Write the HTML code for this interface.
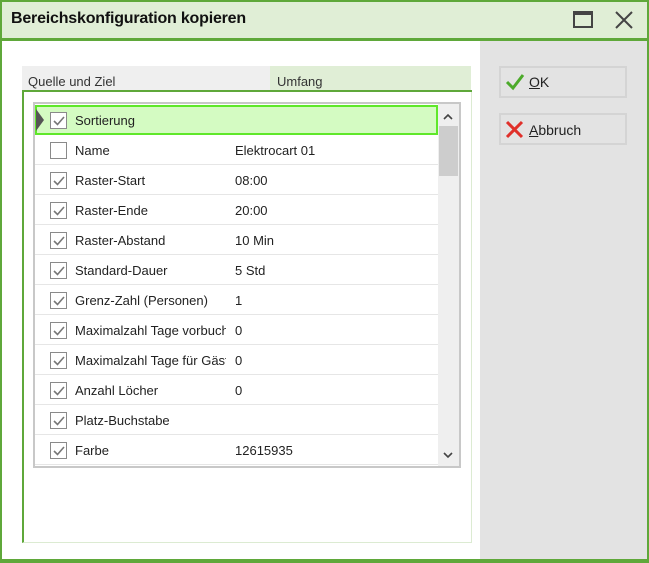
<!DOCTYPE html>
<html><head><style>
*{margin:0;padding:0;box-sizing:border-box}
body{width:649px;height:563px;overflow:hidden;background:#fff;font-family:"Liberation Sans",sans-serif;font-size:13px;color:#222;position:relative}
.abs{position:absolute}
.row{position:absolute;left:35px;width:403px;height:30px;border-bottom:1px solid #e6e6e6}
.row .cb{position:absolute;left:15px;top:7px;width:17px;height:17px;border:1px solid #8a8a8a;background:#fff}
.row .cb svg{position:absolute;left:1px;top:1px}
.row .l{position:absolute;left:40px;top:8px;white-space:nowrap;width:151px;overflow:hidden}
.row .v{position:absolute;left:200px;top:8px}
.btn{position:absolute;left:499px;width:128px;height:32px;border:2px solid #d4d4d4;background:#e3e3e3;font-size:14px}
</style></head><body>
<div class="abs" style="left:0;top:0;width:649px;height:563px;border:2px solid #5fa83a"></div>
<div class="abs" style="left:2px;top:2px;width:645px;height:37px;background:#e0eed6"></div>
<div class="abs" style="left:2px;top:38px;width:645px;height:3px;background:#5fa83a"></div>
<div class="abs" style="left:11px;top:10px;font-size:16px;font-weight:bold;color:#111;letter-spacing:-0.2px">Bereichskonfiguration kopieren</div>
<div class="abs" style="left:573px;top:11px;width:20px;height:17px;border:2px solid #444;border-top-width:4px"></div>
<svg class="abs" style="left:614px;top:10px" width="20" height="20"><path d="M2 2L18 18M18 2L2 18" stroke="#444" stroke-width="2"/></svg>
<div class="abs" style="left:480px;top:41px;width:167px;height:520px;background:#e3e3e3"></div>
<div class="abs" style="left:2px;top:559px;width:645px;height:2px;background:#5fa83a"></div>
<div class="abs" style="left:22px;top:66px;width:248px;height:25px;background:#efefef"></div>
<div class="abs" style="left:270px;top:66px;width:201px;height:25px;background:#e0eed6"></div>
<div class="abs" style="left:28px;top:74px;color:#333">Quelle und Ziel</div>
<div class="abs" style="left:277px;top:74px;color:#333">Umfang</div>
<div class="abs" style="left:22px;top:90px;width:450px;height:2px;background:#5fa83a"></div>
<div class="abs" style="left:22px;top:92px;width:450px;height:451px;border-left:2px solid #5fa83a;border-right:1px solid #dcebd2;border-bottom:1px solid #dcebd2"></div>
<div class="abs" style="left:33px;top:102px;width:428px;height:366px;border:2px solid #c8c8c8;background:#fff"></div>
<div class="abs" style="left:438px;top:104px;width:21px;height:362px;background:#efefef"></div>
<div class="abs" style="left:439px;top:126px;width:19px;height:50px;background:#cdcdcd"></div>
<svg class="abs" style="left:443px;top:113px" width="10" height="8"><path d="M1 6L5 2L9 6" stroke="#444" stroke-width="1.6" fill="none"/></svg>
<svg class="abs" style="left:443px;top:451px" width="10" height="8"><path d="M1 2L5 6L9 2" stroke="#444" stroke-width="1.6" fill="none"/></svg>
<div id="rows"></div>
<div class="row" style="top:105px;background:#d4fbc2;border:2px solid #5fe82a;width:403px">
<div class="cb" style="left:13px;top:5px"><svg width="14" height="14"><path d="M2 7L5.5 10.5L12 3" stroke="#777" stroke-width="1.6" fill="none"/></svg></div>
<div class="l" style="left:38px;top:6px">Sortierung</div></div>
<div class="abs" style="left:36px;top:109px;width:0;height:0;border-top:11px solid transparent;border-bottom:11px solid transparent;border-left:8px solid #555"></div>
<script>
var d=[["Name","Elektrocart 01",0],["Raster-Start","08:00",1],["Raster-Ende","20:00",1],["Raster-Abstand","10 Min",1],["Standard-Dauer","5 Std",1],["Grenz-Zahl (Personen)","1",1],["Maximalzahl Tage vorbuchen","0",1],["Maximalzahl Tage für Gäste","0",1],["Anzahl Löcher","0",1],["Platz-Buchstabe","",1],["Farbe","12615935",1]];
var h="";d.forEach(function(r,i){h+='<div class="row" style="top:'+(135+i*30)+'px"><div class="cb">'+(r[2]?'<svg width="14" height="14"><path d="M2 7L5.5 10.5L12 3" stroke="#777" stroke-width="1.6" fill="none"/></svg>':'')+'</div><div class="l">'+r[0]+'</div><div class="v">'+r[1]+'</div></div>';});
document.getElementById("rows").innerHTML=h;
</script>
<div class="btn" style="top:66px"><svg class="abs" style="left:4px;top:5px" width="20" height="18"><path d="M2 9L8 15L18 2" stroke="#4caa2a" stroke-width="3" fill="none"/></svg><span class="abs" style="left:28px;top:6px"><u>O</u>K</span></div>
<div class="btn" style="top:113px"><svg class="abs" style="left:4px;top:5px" width="20" height="20"><path d="M2 2L17 17M17 2L2 17" stroke="#e0302a" stroke-width="3"/></svg><span class="abs" style="left:28px;top:7px"><u>A</u>bbruch</span></div>
</body></html>
